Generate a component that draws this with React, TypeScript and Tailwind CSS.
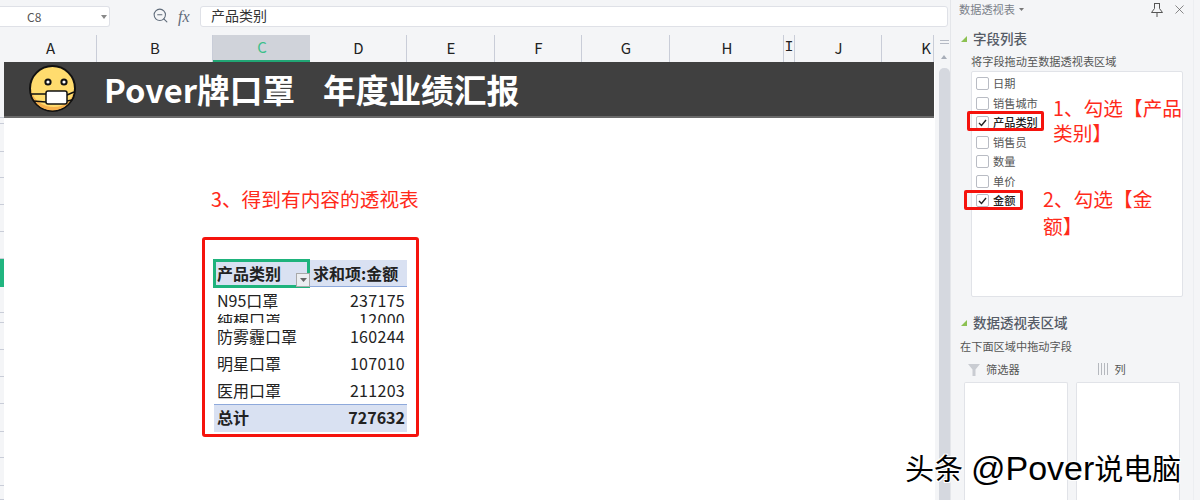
import { X, ZoomOut } from "lucide-react"

const columns = [
  { name: "A", w: "w-[93px]" },
  { name: "B", w: "w-[116px]" },
  { name: "C", w: "w-[97px]", active: true },
  { name: "D", w: "w-[97px]" },
  { name: "E", w: "w-[88px]" },
  { name: "F", w: "w-[87px]" },
  { name: "G", w: "w-[88px]" },
  { name: "H", w: "w-[114px]" },
  { name: "I", w: "w-[11px]", serif: true },
  { name: "J", w: "w-[87px]" },
  { name: "K", w: "w-[52px]", end: true },
]

const rowHeights = [56, 6, 28, 26, 27, 27, 27, 28, 26, 10, 27, 27, 27, 28, 26, 28, 14]

const fields = [
  { name: "日期" },
  { name: "销售城市" },
  { name: "产品类别", checked: true },
  { name: "销售员" },
  { name: "数量" },
  { name: "单价" },
  { name: "金额", checked: true },
]

const pivotRows = [
  { name: "防雾霾口罩", value: "160244" },
  { name: "明星口罩", value: "107010" },
  { name: "医用口罩", value: "211203" },
]

function MaskFace() {
  return (
    <svg width="48" height="48" viewBox="0 0 48 48" className="shrink-0">
      <circle cx="23.5" cy="23.5" r="22.5" fill="#ffdc6e" stroke="#111" strokeWidth="2" />
      <path d="M2 24a21.5 21.5 0 0 0 43 0c-1 12-10 18-20 18S4 36 2 24z" fill="#f6b04c" />
      <circle cx="19" cy="17" r="2.6" fill="#fff" stroke="#111" strokeWidth="2" />
      <circle cx="35" cy="17" r="2.6" fill="#fff" stroke="#111" strokeWidth="2" />
      <path d="M2 29h15M4 36l13 1M38 30l7-3M38 36l5-1" stroke="#111" strokeWidth="1.5" fill="none" />
      <rect x="17" y="26" width="21" height="13" rx="2" fill="#fff" stroke="#111" strokeWidth="1.5" />
    </svg>
  )
}

function Triangle() {
  return (
    <svg width="6" height="6" viewBox="0 0 6 6" className="shrink-0">
      <polygon points="6,0 6,6 0,6" fill="#8cc152" />
    </svg>
  )
}

function SectionTitle({ title }: { title: string }) {
  return (
    <div className="flex h-[18px] items-center gap-[6px] pl-[10px] text-[13.5px] font-medium text-[#555b66]">
      <Triangle />
      <span className="-mt-[2px]">{title}</span>
    </div>
  )
}

export default function App() {
  return (
    <div className="relative flex h-[500px] w-[1200px] overflow-hidden bg-[#f4f5f7] font-['Noto_Sans_CJK_SC',sans-serif] text-[#222]">
      <div className="flex w-[950px] shrink-0 flex-col">
        {/* formula bar */}
        <div className="flex h-[35px] shrink-0 items-start pt-[6px]">
          <div className="relative flex h-[21px] w-[110px] items-center rounded-r-[3px] border border-l-0 border-[#dfe1e7] bg-white pl-[27px] text-[12px] text-[#555]">
            C8
            <svg width="6" height="4" viewBox="0 0 6 4" className="absolute right-[2px] top-[8px]">
              <polygon points="0,0 6,0 3,4" fill="#888" />
            </svg>
          </div>
          <ZoomOut className="ml-[42px] mt-[1px] h-[17px] w-[17px] text-[#5f6b7a]" strokeWidth={1.5} />
          <span className="ml-[9px] w-[22px] font-['Liberation_Serif',serif] text-[16px] italic leading-[21px] text-[#5f6b7a]">fx</span>
          <div className="flex h-[21px] w-[748px] items-center rounded-[3px] border border-[#dfe1e7] bg-white pb-[3px] pl-[10px] text-[14px] text-[#333]">
            产品类别
          </div>
        </div>

        <div className="flex min-h-0 flex-1">
          {/* sheet */}
          <div className="flex w-[935px] shrink-0 flex-col bg-white">
            <div className="flex h-[27px] shrink-0 bg-[#f4f5f7] pl-[4px]">
              {columns.map((col) => (
                <div
                  key={col.name}
                  className={
                    "flex shrink-0 items-center text-[15px] " +
                    col.w +
                    (col.end ? " justify-end pr-[2px]" : " justify-center") +
                    (col.active
                      ? " border-b-2 border-b-[#21a675] bg-[#d0d3da] pl-[1px] text-[#3cc08a]"
                      : " border-r border-r-[#c9cdd8] text-[#222]") +
                    (col.serif ? " font-['Liberation_Mono',monospace] text-[14px]" : "") +
                    (!col.active && !col.end && !col.serif ? " pl-[1px]" : "")
                  }
                >
                  {col.name}
                </div>
              ))}
            </div>

            <div className="flex min-h-0 flex-1">
              <div className="flex w-[4px] shrink-0 flex-col bg-[#f4f5f7]">
                {rowHeights.map((h, i) => (
                  <div
                    key={i}
                    style={{ height: h }}
                    className={i === 7 ? "shrink-0 bg-[#21b57f]" : "shrink-0 border-b border-[#c9cdd8]"}
                  />
                ))}
              </div>

              <div className="min-w-0 flex-1 bg-white">
                <div className="mr-[1px] flex h-[56px] items-center gap-[28px] border-b-2 border-[#6a6a6a] bg-[#404040] pl-[25px] text-[32.7px] font-bold text-white">
                  <MaskFace />
                  <div className="-ml-[1px] flex gap-[28px]">
                    <span>Pover牌口罩</span>
                    <span>年度业绩汇报</span>
                  </div>
                </div>

                <div className="pl-[198px]">
                  <div className="mt-[67px] h-[28px] pl-[9px] text-[19.7px] leading-[28px] whitespace-nowrap text-[#ff2a1a]">
                    3、得到有内容的透视表
                  </div>

                  {/* pivot table */}
                  <div className="relative mt-[24px] h-[200px] w-[217px] rounded-[3px] border-[3px] border-[#f5130d] pl-[9px] pt-[20px] text-[16px] leading-none text-[#222]">
                    <div className="flex h-[27px] w-[193px] border-b border-[#8ea9db] bg-[#d9e1f2] font-bold">
                      <div className="flex w-[97px] items-center pl-[3px]">产品类别</div>
                      <div className="flex flex-1 items-center whitespace-nowrap pl-[2px]">求和项:金额</div>
                    </div>
                    <div className="flex h-[27px] w-[193px] items-center justify-between pb-[2px] pl-[3px] pr-[2px]">
                      <span>N95口罩</span>
                      <span className="tracking-[0.3px]">237175</span>
                    </div>
                    <div className="flex h-[9px] w-[193px] items-center justify-between overflow-hidden pl-[3px] pr-[2px]">
                      <span>纯棉口罩</span>
                      <span className="tracking-[0.3px]">12000</span>
                    </div>
                    {pivotRows.map((row) => (
                      <div key={row.name} className="flex h-[27px] w-[193px] items-center justify-between pb-[2px] pl-[3px] pr-[2px]">
                        <span>{row.name}</span>
                        <span className="tracking-[0.3px]">{row.value}</span>
                      </div>
                    ))}
                    <div className="flex h-[28px] w-[193px] items-center justify-between border-t border-[#8ea9db] bg-[#d9e1f2] pb-[3px] pl-[3px] pr-[2px] font-bold">
                      <span>总计</span>
                      <span>727632</span>
                    </div>

                    <div className="absolute left-[8px] top-[19px] h-[29px] w-[97px] border-[3px] border-[#1eb37c]" />
                    <div className="absolute left-[91px] top-[33px] flex h-[14px] w-[14px] items-center justify-center border border-[#a9a9a9] bg-[#eceef1]">
                      <svg width="7" height="4" viewBox="0 0 7 4">
                        <polygon points="0,0 7,0 3.5,4" fill="#666" />
                      </svg>
                    </div>
                  </div>
                </div>
              </div>
            </div>
          </div>

          {/* sheet scrollbar */}
          <div className="flex w-[15px] shrink-0 flex-col items-center bg-[#f4f5f7] pl-[3px]">
            <div className="mt-[5px] h-[4px] w-[9px] border-y border-[#b5bac4]" />
            <svg width="6" height="4" viewBox="0 0 6 4" className="mt-[11px]">
              <polygon points="3,0 6,4 0,4" fill="#a7adb8" />
            </svg>
            <div className="mt-[9px] w-[11px] flex-1 rounded-t-[5px] bg-[#d5d8df]" />
          </div>
        </div>
      </div>

      {/* side panel */}
      <div className="flex min-w-0 flex-1 flex-col border-l border-[#e4e6ea] text-[11.2px] text-[#555]">
        <div className="flex h-[18px] items-center pl-[8px] pr-[13px]">
          <span className="text-[#7a7f89]">数据透视表</span>
          <svg width="5" height="3" viewBox="0 0 5 3" className="ml-[4px]">
            <polygon points="0,0 5,0 2.5,3" fill="#777" />
          </svg>
          <svg width="14" height="15" viewBox="0 0 14 15" className="ml-auto" fill="none" stroke="#555" strokeWidth="1">
            <path d="M4 1.5h6M4.5 1.5v5L1.5 10.5h11L9.5 6.5v-5M7 10.5V15" />
          </svg>
          <X className="ml-[8px] h-[15px] w-[15px] text-[#555]" strokeWidth={1.1} />
        </div>

        <div className="mt-[12px]">
          <SectionTitle title="字段列表" />
        </div>
        <div className="mt-[5px] h-[16px] pl-[20px] leading-[16px]">将字段拖动至数据透视表区域</div>

        <div className="ml-[20px] mt-[2px] h-[226px] w-[212px] rounded-[2px] border border-[#e1e3e8] bg-white pl-[4px] pt-[2px]">
          {fields.map((f) => (
            <div key={f.name} className="flex h-[19.5px] items-center gap-[4px]">
              <div className="flex h-[13px] w-[13px] shrink-0 items-center justify-center rounded-[2px] border border-[#b9bcc4] bg-white">
                {f.checked && (
                  <svg width="9" height="8" viewBox="0 0 9 8" fill="none" stroke="#222" strokeWidth="1.4">
                    <path d="M1 4l2.5 2.5L8 1" />
                  </svg>
                )}
              </div>
              <span className={f.checked ? "font-medium text-[#222]" : "text-[#555]"}>{f.name}</span>
            </div>
          ))}
        </div>

        <div className="mt-[17px]">
          <SectionTitle title="数据透视表区域" />
        </div>
        <div className="mt-[6px] h-[16px] pl-[9px] leading-[16px]">在下面区域中拖动字段</div>

        <div className="mt-[7px] flex h-[16px] items-center">
          <svg width="12" height="13" viewBox="0 0 12 13" className="ml-[17px]">
            <path d="M0 1h12L7.5 6.5V13h-3V6.5z" fill="#c9ccd2" />
          </svg>
          <span className="ml-[6px]">筛选器</span>
          <svg width="10" height="12" viewBox="0 0 10 12" className="ml-[78px]">
            <path d="M0.5 0v12M3.5 0v12M6.5 0v12M9.5 0v12" stroke="#b5b8be" strokeWidth="1" />
          </svg>
          <span className="ml-[7px]">列</span>
        </div>

        <div className="ml-[13px] mt-[5px] flex min-h-0 flex-1 gap-[8px]">
          <div className="w-[104px] rounded-t-[2px] border border-b-0 border-[#e1e3e8] bg-white" />
          <div className="w-[104px] rounded-t-[2px] border border-b-0 border-[#e1e3e8] bg-white" />
        </div>
      </div>

      {/* annotations on top of the panel */}
      <div className="absolute bottom-0 left-[1193px] top-0 w-px bg-[#eceef1]" />
      <div className="absolute left-[967px] top-[111px] h-[20px] w-[77px] rounded-[2px] border-[3px] border-[#f5130d]" />
      <div className="absolute left-[964px] top-[190px] h-[20px] w-[59px] rounded-[2px] border-[3px] border-[#f5130d]" />
      <div className="absolute left-[1053px] top-[95px] w-[134px] text-[19.7px] leading-[25px] text-[#ff2a1a]">
        1、勾选【产品类别】
      </div>
      <div className="absolute left-[1043px] top-[185px] w-[120px] text-[19.7px] leading-[27px] text-[#ff2a1a]">
        2、勾选【金额】
      </div>
      <div className="absolute left-[905px] top-[447px] flex items-baseline whitespace-nowrap font-['Liberation_Sans','Noto_Sans_CJK_SC',sans-serif] text-[29px] leading-[42px] text-black [text-shadow:1px_1px_0_#fff,-1px_-1px_0_#fff,1px_-1px_0_#fff,-1px_1px_0_#fff]">
        <span>头条</span>
        <span className="ml-[8px] text-[34px] font-light">@Pover</span>
        <span>说电脑</span>
      </div>
    </div>
  )
}
